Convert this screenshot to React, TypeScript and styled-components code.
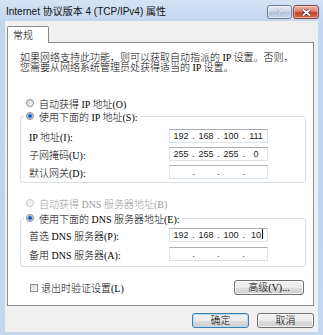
import React from 'react'
import styled, { createGlobalStyle } from 'styled-components'

const GlobalStyle = createGlobalStyle`
  html, body {
    margin: 0;
    padding: 0;
    background: #ffffff;
  }
  body {
    font-family: "Liberation Serif", "Noto Sans CJK SC", serif;
    font-weight: 300;
    color: #000000;
  }
`

const Window = styled.div`
  width: 323px;
  height: 335px;
  box-sizing: border-box;
  display: flex;
  flex-direction: column;
  padding: 0 5px 3px 5px;
  background: linear-gradient(#d3e3f5 0, #c2d6ef 22px, #bdd3ee 200px, #c4d8f0 100%);
`

const TitleBar = styled.div`
  height: 21px;
  display: flex;
  align-items: flex-start;
  justify-content: space-between;
  margin-right: -1px;
`

const Title = styled.div`
  margin: 6px 0 0 1px;
  font-family: "Liberation Sans", "Noto Sans CJK SC", sans-serif;
  font-weight: 400;
  font-size: 10px;
  line-height: 12px;
  white-space: nowrap;
  color: #111111;
`

const CaptionButtons = styled.div`
  display: flex;
  gap: 1px;
  margin-top: 5px;
`

const CaptionButton = styled.div<{ $close?: boolean }>`
  width: ${p => (p.$close ? 26 : 25)}px;
  height: 14px;
  box-sizing: border-box;
  border-radius: 3px;
  border: 1px solid ${p => (p.$close ? '#83453c' : '#6e7f98')};
  display: flex;
  align-items: center;
  justify-content: center;
  font-family: "Liberation Sans", sans-serif;
  font-size: 9px;
  font-weight: bold;
  color: #ffffff;
  text-shadow: 0 0 1px #334466;
  background: ${p =>
    p.$close
      ? 'linear-gradient(#eeb0a2 0, #d97f6c 45%, #c3442c 55%, #d76a52 100%)'
      : 'linear-gradient(#e8eef7 0, #cbd8e8 45%, #b2c4dc 55%, #c5d5e8 100%)'};
  box-shadow: inset 0 0 0 1px rgba(255, 255, 255, 0.45);
`

const Body = styled.div`
  flex: 1;
  display: flex;
  flex-direction: column;
  padding: 5px 4px 4px 2px;
  background: #f0f0f0;
`

const TabStrip = styled.div`
  height: 16px;
  display: flex;
`

const Tab = styled.div`
  width: 42px;
  height: 17px;
  box-sizing: border-box;
  padding: 2px 0 0 5px;
  border: 1px solid #898c95;
  border-bottom: none;
  border-radius: 2px 2px 0 0;
  background: #ffffff;
  position: relative;
  z-index: 1;
  font-family: "Noto Sans CJK SC", sans-serif;
  font-size: 10px;
  line-height: 12px;
`

const Panel = styled.div`
  height: 264px;
  box-sizing: border-box;
  border: 1px solid #898c95;
  background: #ffffff;
  padding: 10px 7px 0 12px;
  display: flex;
  flex-direction: column;
`

const Intro = styled.div`
  font-size: 10px;
  line-height: 10px;
  white-space: nowrap;
`

const OptionRow = styled.div<{ $gap: number; $disabled?: boolean }>`
  margin-top: ${p => p.$gap}px;
  height: 12px;
  display: flex;
  align-items: center;
  gap: 5px;
  padding-left: 6px;
  font-size: 10px;
  white-space: nowrap;
  color: ${p => (p.$disabled ? '#9a9a9a' : '#000000')};
`

const Radio = styled.span<{ $checked?: boolean; $disabled?: boolean }>`
  flex: none;
  width: 8px;
  height: 8px;
  box-sizing: border-box;
  border-radius: 50%;
  border: 1px solid ${p => (p.$disabled ? '#c8c8c8' : '#8b8d90')};
  background: ${p =>
    p.$checked
      ? 'radial-gradient(circle, #0b3e98 0, #2670d2 1.4px, #86bdf0 2.4px, #f2f2f2 3px)'
      : p.$disabled
      ? 'linear-gradient(135deg, #ececec, #fafafa)'
      : 'linear-gradient(135deg, #d6d6d6, #fafafa)'};
`

const Group = styled.fieldset<{ $gap: number }>`
  margin: ${p => p.$gap}px 0 0 0;
  padding: 0;
  min-width: 0;
  border: 1px solid #d5dfe5;
  border-radius: 3px;
`

const Legend = styled.legend`
  margin-left: 3px;
  padding: 0 2px;
  height: 12px;
  display: flex;
  align-items: center;
  gap: 5px;
  font-size: 10px;
  white-space: nowrap;
`

const Rows = styled.div<{ $top: number; $bottom: number; $gap: number }>`
  display: flex;
  flex-direction: column;
  gap: ${p => p.$gap}px;
  padding: ${p => p.$top}px 0 ${p => p.$bottom}px 8px;
`

const FieldRow = styled.div`
  height: 14px;
  display: flex;
  align-items: center;
`

const FieldLabel = styled.span`
  width: 140px;
  flex: none;
  font-size: 10px;
  white-space: nowrap;
`

const IpBox = styled.div`
  width: 99px;
  height: 14px;
  box-sizing: border-box;
  display: flex;
  align-items: center;
  border: 1px solid #dde2e8;
  border-top-color: #abadb3;
  background: #ffffff;
  font-family: "Liberation Sans", sans-serif;
  font-weight: 400;
  font-size: 9px;
  color: #222222;
`

const Octet = styled.span`
  width: 22px;
  text-align: center;
  position: relative;
`

const Dot = styled.span`
  width: 3px;
  text-align: center;
`

const Caret = styled.span`
  position: absolute;
  top: -1px;
  width: 1px;
  height: 10px;
  margin-left: 1px;
  background: #000000;
`

const FooterRow = styled.div`
  margin-top: 13px;
  height: 15px;
  display: flex;
  align-items: center;
  justify-content: space-between;
  padding: 0 2px 0 10px;
`

const CheckLabel = styled.label`
  display: flex;
  align-items: center;
  gap: 3px;
  font-size: 10px;
  white-space: nowrap;
`

const CheckBox = styled.span`
  width: 8px;
  height: 8px;
  box-sizing: border-box;
  border: 1px solid #8b8d90;
  background: linear-gradient(135deg, #d8d8d8, #f8f8f8);
`

const Button = styled.button<{ $w: number; $default?: boolean }>`
  width: ${p => p.$w}px;
  height: 15px;
  box-sizing: border-box;
  padding: 0;
  border-radius: 3px;
  border: 1px solid ${p => (p.$default ? '#3c7fb1' : '#707070')};
  background: linear-gradient(#f2f2f2 0, #ebebeb 50%, #dddddd 51%, #cfcfcf 100%);
  box-shadow: inset 0 0 0 1px ${p => (p.$default ? '#b5dbf5' : 'rgba(255,255,255,0.7)')};
  font-family: "Liberation Serif", "Noto Sans CJK SC", serif;
  font-weight: 300;
  font-size: 10px;
  line-height: 12px;
  color: #000000;
`

const DialogButtons = styled.div`
  margin-top: 7px;
  display: flex;
  justify-content: flex-end;
  gap: 8px;
`

const IpField = ({ value, caret }: { value: string[]; caret?: boolean }) => (
  <IpBox>
    {value.map((v, i) => (
      <React.Fragment key={i}>
        {i > 0 && <Dot>.</Dot>}
        <Octet>
          {v}
          {caret && i === 3 && <Caret />}
        </Octet>
      </React.Fragment>
    ))}
  </IpBox>
)

const empty = ['', '', '', '']

export default function App() {
  return (
    <>
      <GlobalStyle />
      <Window>
        <TitleBar>
          <Title>Internet 协议版本 4 (TCP/IPv4) 属性</Title>
          <CaptionButtons>
            <CaptionButton>?</CaptionButton>
            <CaptionButton $close>
              <svg width="9" height="7" viewBox="0 0 9 7">
                <path d="M1 0.5 L8 6.5 M8 0.5 L1 6.5" stroke="#4a2a26" strokeWidth="3" />
                <path d="M1 0.5 L8 6.5 M8 0.5 L1 6.5" stroke="#ffffff" strokeWidth="1.8" />
              </svg>
            </CaptionButton>
          </CaptionButtons>
        </TitleBar>
        <Body>
          <TabStrip>
            <Tab>常规</Tab>
          </TabStrip>
          <Panel>
            <Intro>
              如果网络支持此功能，则可以获取自动指派的 IP 设置。否则，
              <br />
              您需要从网络系统管理员处获得适当的 IP 设置。
            </Intro>

            <OptionRow $gap={24}>
              <Radio />
              自动获得 IP 地址(O)
            </OptionRow>
            <Group $gap={1}>
              <Legend>
                <Radio $checked />
                使用下面的 IP 地址(S):
              </Legend>
              <Rows $top={7} $bottom={3} $gap={4}>
                <FieldRow>
                  <FieldLabel>IP 地址(I):</FieldLabel>
                  <IpField value={['192', '168', '100', '111']} />
                </FieldRow>
                <FieldRow>
                  <FieldLabel>子网掩码(U):</FieldLabel>
                  <IpField value={['255', '255', '255', '0']} />
                </FieldRow>
                <FieldRow>
                  <FieldLabel>默认网关(D):</FieldLabel>
                  <IpField value={empty} />
                </FieldRow>
              </Rows>
            </Group>

            <OptionRow $gap={14} $disabled>
              <Radio $disabled />
              自动获得 DNS 服务器地址(B)
            </OptionRow>
            <Group $gap={3}>
              <Legend>
                <Radio $checked />
                使用下面的 DNS 服务器地址(E):
              </Legend>
              <Rows $top={4} $bottom={5} $gap={5}>
                <FieldRow>
                  <FieldLabel>首选 DNS 服务器(P):</FieldLabel>
                  <IpField value={['192', '168', '100', '10']} caret />
                </FieldRow>
                <FieldRow>
                  <FieldLabel>备用 DNS 服务器(A):</FieldLabel>
                  <IpField value={empty} />
                </FieldRow>
              </Rows>
            </Group>

            <FooterRow>
              <CheckLabel>
                <CheckBox />
                退出时验证设置(L)
              </CheckLabel>
              <Button $w={70}>高级(V)...</Button>
            </FooterRow>
          </Panel>
          <DialogButtons>
            <Button $w={57} $default>确定</Button>
            <Button $w={57}>取消</Button>
          </DialogButtons>
        </Body>
      </Window>
    </>
  )
}
